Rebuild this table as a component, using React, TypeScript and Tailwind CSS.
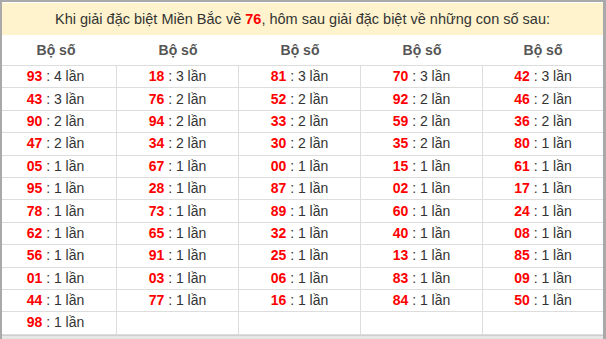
import React from "react";

const cols: [string, number][][] = [
  [["93",4],["43",3],["90",2],["47",2],["05",1],["95",1],["78",1],["62",1],["56",1],["01",1],["44",1],["98",1]],
  [["18",3],["76",2],["94",2],["34",2],["67",1],["28",1],["73",1],["65",1],["91",1],["03",1],["77",1]],
  [["81",3],["52",2],["33",2],["30",2],["00",1],["87",1],["89",1],["32",1],["25",1],["06",1],["16",1]],
  [["70",3],["92",2],["59",2],["35",2],["15",1],["02",1],["60",1],["40",1],["13",1],["83",1],["84",1]],
  [["42",3],["46",2],["36",2],["80",1],["61",1],["17",1],["24",1],["08",1],["85",1],["09",1],["50",1]],
];

export default function App() {
  const rows = Array.from({ length: 12 }, (_, r) => r);
  return (
    <div
      className="w-[606px] h-[339px] bg-white overflow-hidden flex flex-col border-t-[2px] border-l-[2px] border-r-[3px] border-[#a9a9a9]"
      style={{ fontFamily: '"Liberation Sans", Arial, sans-serif' }}
    >
      <div className="h-[32px] bg-[#fef3cd] flex items-center justify-center text-[14.5px] text-[#333] pt-[1px] mt-[1px]">
        <span>
          Khi giải đặc biệt Miền Bắc về <b className="text-[#ff0000]">76</b>, hôm sau giải đặc biệt về những con số sau:
        </span>
      </div>
      <div className="grid grid-cols-[115px_122px_122px_122px_120px] h-[31px] border-b border-[#dddddd] text-[14px] font-bold text-[#555]">
        {cols.map((_, i) => (
          <div key={i} className={`flex items-center justify-center ${i === 0 ? "pr-[7px]" : ""}`}>
            Bộ số
          </div>
        ))}
      </div>
      <div className="grid grid-cols-[115px_122px_122px_122px_120px]">
        {rows.map((r) =>
          cols.map((c, i) => {
            const item = c[r];
            return (
              <div
                key={`${r}-${i}`}
                className={`h-[22.4px] flex items-center justify-center border-b border-[#dddddd] text-[14px] text-[#333] ${i < 4 ? "border-r" : ""} ${i === 0 ? "pr-[7px]" : ""}`}
              >
                {item ? (
                  <span>
                    <b className="text-[#ff0000]">{item[0]}</b> : {item[1]} lần
                  </span>
                ) : null}
              </div>
            );
          })
        )}
      </div>
      <div className="flex-1 bg-[#e6e6e6] border-t border-[#cfcfcf]" />
    </div>
  );
}
